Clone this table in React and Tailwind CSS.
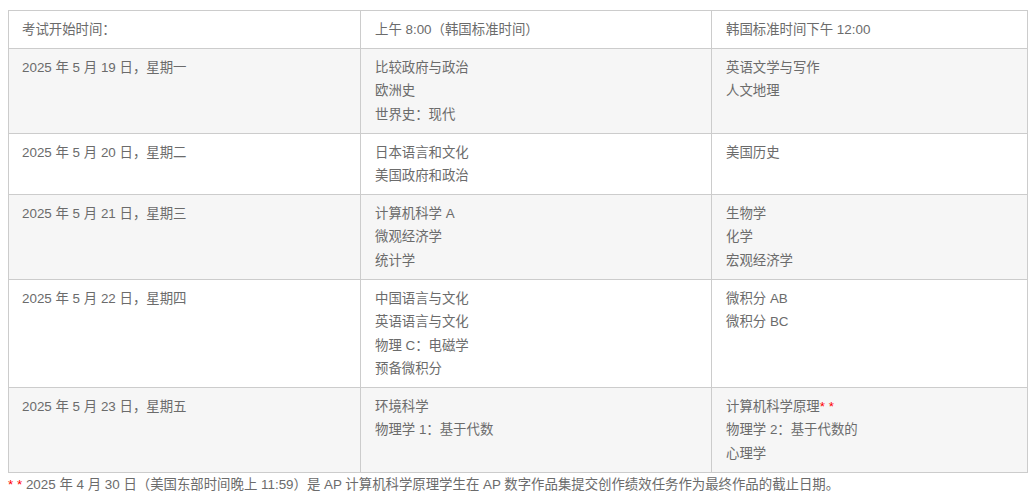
import React from 'react';

const rows = [
  {
    date: '2025 年 5 月 19 日，星期一',
    am: ['比较政府与政治', '欧洲史', '世界史：现代'],
    pm: ['英语文学与写作', '人文地理'],
  },
  {
    date: '2025 年 5 月 20 日，星期二',
    am: ['日本语言和文化', '美国政府和政治'],
    pm: ['美国历史'],
  },
  {
    date: '2025 年 5 月 21 日，星期三',
    am: ['计算机科学 A', '微观经济学', '统计学'],
    pm: ['生物学', '化学', '宏观经济学'],
  },
  {
    date: '2025 年 5 月 22 日，星期四',
    am: ['中国语言与文化', '英语语言与文化', '物理 C：电磁学', '预备微积分'],
    pm: ['微积分 AB', '微积分 BC'],
  },
  {
    date: '2025 年 5 月 23 日，星期五',
    am: ['环境科学', '物理学 1：基于代数'],
    pm: ['计算机科学原理*', '物理学 2：基于代数的', '心理学'],
  },
];

const Star = () => <span className="text-[#ff0000]">* *</span>;

const Line = ({ text }) => {
  if (text.endsWith('*')) {
    return (
      <div>
        {text.slice(0, -1)}
        <Star />
      </div>
    );
  }
  return <div>{text}</div>;
};

const App = () => {
  return (
    <div
      className="bg-white text-[13.4px] leading-[23.4px] text-[#6b6b6b] px-2 pt-[10px]"
      style={{ fontFamily: '"Liberation Sans", "Noto Sans CJK SC", sans-serif' }}
    >
      <div className="w-[1020px] border border-[#cccccc]">
        {/* Header */}
        <div className="grid grid-cols-[351px_351px_1fr]">
          <div className="pl-[13px] py-[6.8px]">考试开始时间：</div>
          <div className="pl-[14px] py-[6.8px] border-l border-[#cccccc]">上午 8:00（韩国标准时间）</div>
          <div className="pl-[14px] py-[6.8px] border-l border-[#cccccc]">韩国标准时间下午 12:00</div>
        </div>

        {rows.map((row, index) => (
          <div
            key={index}
            className={`grid grid-cols-[351px_351px_1fr] border-t border-[#cccccc] ${
              index % 2 === 0 ? 'bg-[#f6f6f6]' : 'bg-white'
            }`}
          >
            <div className="pl-[13px] py-[6.8px]">{row.date}</div>
            <div className="pl-[14px] py-[6.8px] border-l border-[#cccccc]">
              {row.am.map((t, i) => (
                <Line key={i} text={t} />
              ))}
            </div>
            <div className="pl-[14px] py-[6.8px] border-l border-[#cccccc]">
              {row.pm.map((t, i) => (
                <Line key={i} text={t} />
              ))}
            </div>
          </div>
        ))}
      </div>

      {/* Footnote */}
      <p>
        <Star /> 2025 年 4 月 30 日（美国东部时间晚上 11:59）是 AP 计算机科学原理学生在 AP 数字作品集提交创作绩效任务作为最终作品的截止日期。
      </p>
    </div>
  );
};

export default App;
